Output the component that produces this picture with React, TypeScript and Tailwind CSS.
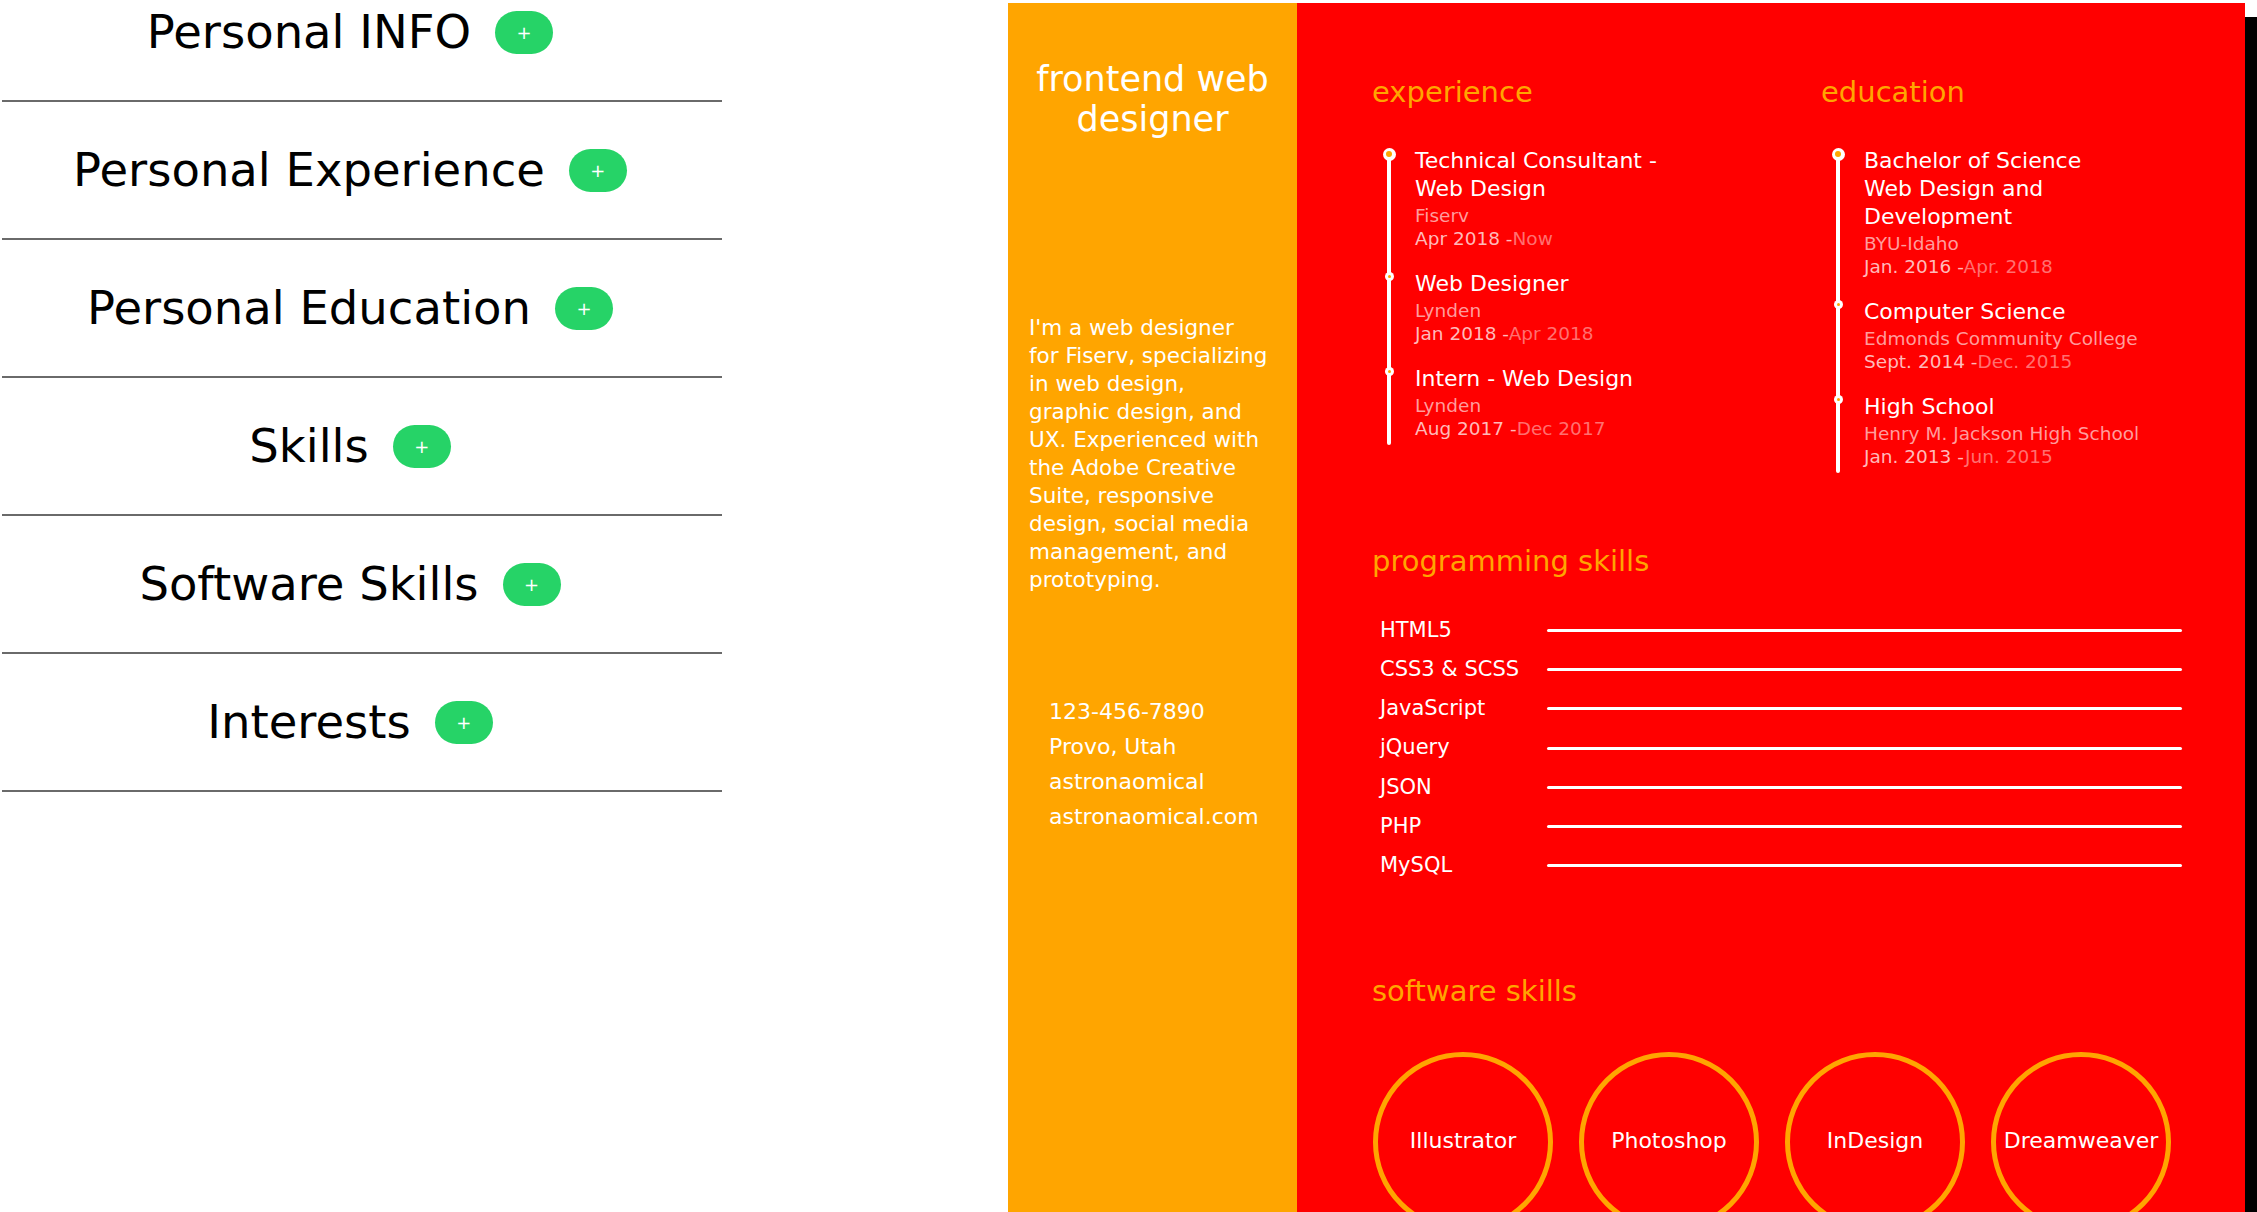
import React from "react";

const sections = [
  "Personal INFO",
  "Personal Experience",
  "Personal Education",
  "Skills",
  "Software Skills",
  "Interests",
];

type Entry = { title: string[]; place: string; start: string; end: string };

const experience: Entry[] = [
  { title: ["Technical Consultant -", "Web Design"], place: "Fiserv", start: "Apr 2018", end: "Now" },
  { title: ["Web Designer"], place: "Lynden", start: "Jan 2018", end: "Apr 2018" },
  { title: ["Intern - Web Design"], place: "Lynden", start: "Aug 2017", end: "Dec 2017" },
];

const education: Entry[] = [
  {
    title: ["Bachelor of Science", "Web Design and", "Development"],
    place: "BYU-Idaho",
    start: "Jan. 2016",
    end: "Apr. 2018",
  },
  { title: ["Computer Science"], place: "Edmonds Community College", start: "Sept. 2014", end: "Dec. 2015" },
  { title: ["High School"], place: "Henry M. Jackson High School", start: "Jan. 2013", end: "Jun. 2015" },
];

const about = [
  "I'm a web designer",
  "for Fiserv, specializing",
  "in web design,",
  "graphic design, and",
  "UX. Experienced with",
  "the Adobe Creative",
  "Suite, responsive",
  "design, social media",
  "management, and",
  "prototyping.",
];

const contact = ["123-456-7890", "Provo, Utah", "astronaomical", "astronaomical.com"];
const languages = ["HTML5", "CSS3 & SCSS", "JavaScript", "jQuery", "JSON", "PHP", "MySQL"];
const software = ["Illustrator", "Photoshop", "InDesign", "Dreamweaver"];

const SectionTitle = ({ label }: { label: string }) => (
  <div className="flex items-center justify-center">
    <h2 className="text-[46.5px] leading-[54px] text-black">{label}</h2>
    <button className="mx-6 flex h-[43px] w-[58px] items-center justify-center rounded-[22px] bg-[#26d367] text-[18px] text-white">
      +
    </button>
  </div>
);

const Timeline = ({ items }: { items: Entry[] }) => (
  <div className="relative ml-[15px] mt-[37px] flex flex-col gap-5 pl-[28px]">
    <div className="absolute left-0 top-[7px] -bottom-[5px] w-1 rounded-full bg-white" />
    {items.map((it, i) => (
      <div key={i} className="relative">
        {i === 0 ? (
          <span className="absolute -left-[32.5px] top-[0.5px] flex h-[13px] w-[13px] items-center justify-center rounded-full bg-white">
            <span className="h-[6px] w-[6px] rounded-full bg-[#ffa500]" />
          </span>
        ) : (
          <span className="absolute -left-[30.5px] top-[1.5px] flex h-[9px] w-[9px] items-center justify-center rounded-full bg-white">
            <span className="h-[3px] w-[3px] rounded-full bg-[#ffa500]" />
          </span>
        )}
        {it.title.map((t) => (
          <div key={t} className="whitespace-nowrap text-[22px] leading-[28px] text-white">
            {t}
          </div>
        ))}
        <div className="mt-[1px] whitespace-nowrap text-[18.5px] leading-[23px] text-[#ff9c9c]">{it.place}</div>
        <div className="whitespace-nowrap text-[18.5px] leading-[23px] text-[#ffbaba]">
          {it.start} -<span className="text-[#ff7070]">{it.end}</span>
        </div>
      </div>
    ))}
  </div>
);

export default function App() {
  return (
    <div className="flex h-[1212px] w-[2257px] overflow-hidden bg-white font-['DejaVu_Sans',sans-serif]">
      {/* accordion list */}
      <div className="ml-[2px] w-[720px] shrink-0">
        <div className="h-[100px]">
          <div className="flex h-[64px] items-center justify-center">
            <SectionTitle label={sections[0]} />
          </div>
        </div>
        <div className="h-[2px] bg-[#6a6a6a]" />
        {sections.slice(1).map((s) => (
          <div key={s}>
            <div className="flex h-[136px] items-center justify-center">
              <SectionTitle label={s} />
            </div>
            <div className="h-[2px] bg-[#6a6a6a]" />
          </div>
        ))}
      </div>

      {/* resume */}
      <div className="ml-[286px] mt-[3px] flex shrink-0">
        <aside className="h-[1300px] w-[289px] bg-[#ffa500] pt-[56px] text-white">
          <h1 className="text-center text-[35px] leading-[40px]">
            frontend web
            <br />
            designer
          </h1>
          <p className="mt-[175px] pl-[21px] text-[21.5px] leading-[28px]">
            {about.map((l) => (
              <span key={l} className="block whitespace-nowrap">
                {l}
              </span>
            ))}
          </p>
          <ul className="mt-[100px] pl-[41px] text-[22px] leading-[35px]">
            {contact.map((c) => (
              <li key={c} className="whitespace-nowrap">
                {c}
              </li>
            ))}
          </ul>
        </aside>

        <main className="h-[1300px] w-[948px] bg-[#ff0000] pl-[75px] pt-[71px] shadow-[14px_14px_0_#000]">
          <div className="grid grid-cols-[449px_1fr]">
            <section>
              <h3 className="text-[29px] leading-[36px] text-[#ffa500]">experience</h3>
              <Timeline items={experience} />
            </section>
            <section>
              <h3 className="text-[29px] leading-[36px] text-[#ffa500]">education</h3>
              <Timeline items={education} />
            </section>
          </div>

          <h3 className="mt-[75px] text-[29px] leading-[36px] text-[#ffa500]">programming skills</h3>
          <div className="mt-[32px] pl-[8px]">
            {languages.map((l) => (
              <div key={l} className="flex h-[39.2px] items-center">
                <span className="w-[167px] text-[21px] text-white">{l}</span>
                <span className="h-[3px] w-[635px] rounded-full bg-white" />
              </div>
            ))}
          </div>

          <h3 className="mt-[88px] text-[29px] leading-[36px] text-[#ffa500]">software skills</h3>
          <div className="ml-[1px] mt-[43px] flex gap-[26px]">
            {software.map((s) => (
              <div
                key={s}
                className="flex h-[180px] w-[180px] items-center justify-center rounded-full border-[5px] border-[#ffa500] pb-[3px] text-[22px] text-white"
              >
                {s}
              </div>
            ))}
          </div>
        </main>
      </div>
    </div>
  );
}
